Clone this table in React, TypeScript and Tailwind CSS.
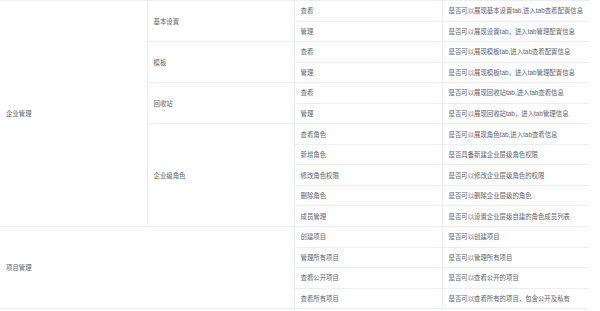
import React from 'react';

interface PermRow {
  action: string;
  desc: string;
}

interface Group {
  name: string;
  rows: PermRow[];
}

interface Module {
  name: string;
  groups: Group[];
  // no sub groups: module cell spans the first two columns
  flat?: boolean;
}

const modules: Module[] = [
  {
    name: '企业管理',
    groups: [
      {
        name: '基本设置',
        rows: [
          { action: '查看', desc: '是否可以展现基本设置tab,进入tab查看配置信息' },
          { action: '管理', desc: '是否可以展现设置tab，进入tab管理配置信息' },
        ],
      },
      {
        name: '模板',
        rows: [
          { action: '查看', desc: '是否可以展现模板tab,进入tab查看配置信息' },
          { action: '管理', desc: '是否可以展现模板tab，进入tab管理配置信息' },
        ],
      },
      {
        name: '回收站',
        rows: [
          { action: '查看', desc: '是否可以展现回收站tab,进入tab查看信息' },
          { action: '管理', desc: '是否可以展现回收站tab，进入tab管理信息' },
        ],
      },
      {
        name: '企业级角色',
        rows: [
          { action: '查看角色', desc: '是否可以展现角色tab,进入tab查看信息' },
          { action: '新增角色', desc: '是否具备新建企业层级角色权限' },
          { action: '修改角色权限', desc: '是否可以修改企业层级角色的权限' },
          { action: '删除角色', desc: '是否可以删除企业层级的角色' },
          { action: '成员管理', desc: '是否可以设置企业层级自建的角色成员列表' },
        ],
      },
    ],
  },
  {
    name: '项目管理',
    flat: true,
    groups: [
      {
        name: '',
        rows: [
          { action: '创建项目', desc: '是否可以创建项目' },
          { action: '管理所有项目', desc: '是否可以管理所有项目' },
          { action: '查看公开项目', desc: '是否可以查看公开的项目' },
          { action: '查看所有项目', desc: '是否可以查看所有的项目，包含公开及私有' },
        ],
      },
    ],
  },
];

const cell = 'border-b border-[#ebeef5] px-[6px] align-middle text-left font-normal whitespace-nowrap';

export default function App() {
  return (
    <div
      className="bg-white text-[#606266] text-[6.4px] leading-[9px]"
      style={{ fontFamily: '"Liberation Sans", "Noto Sans CJK SC", sans-serif' }}
    >
      <table className="w-[589px] table-fixed border-collapse border-t border-[#ebeef5]">
        <colgroup>
          <col className="w-[147px]" />
          <col className="w-[147px]" />
          <col className="w-[148px]" />
          <col className="w-[147px]" />
        </colgroup>
        <tbody>
          {modules.map(mod => {
            const total = mod.groups.reduce((n, g) => n + g.rows.length, 0);
            return mod.groups.map((group, gi) =>
              group.rows.map((row, ri) => (
                <tr key={`${mod.name}-${gi}-${ri}`} className="h-[20.55px]">
                  {gi === 0 && ri === 0 && (
                    <td
                      rowSpan={total}
                      colSpan={mod.flat ? 2 : 1}
                      className={`${cell} border-r`}
                    >
                      {mod.name}
                    </td>
                  )}
                  {!mod.flat && ri === 0 && (
                    <td rowSpan={group.rows.length} className={`${cell} border-r`}>
                      {group.name}
                    </td>
                  )}
                  <td className={`${cell} border-r`}>{row.action}</td>
                  <td className={cell}>{row.desc}</td>
                </tr>
              ))
            );
          })}
        </tbody>
      </table>
    </div>
  );
}
